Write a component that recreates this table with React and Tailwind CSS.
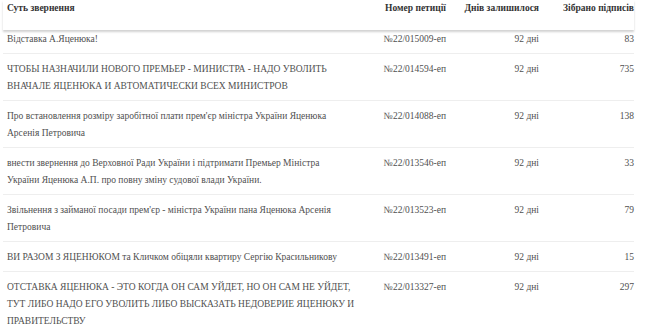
import React from "react";

const rows = [
  { t: ["Відставка А.Яценюка!"], n: "№22/015009-еп", c: "83" },
  { t: ["ЧТОБЫ НАЗНАЧИЛИ НОВОГО ПРЕМЬЕР - МИНИСТРА - НАДО УВОЛИТЬ", "ВНАЧАЛЕ ЯЦЕНЮКА И АВТОМАТИЧЕСКИ ВСЕХ МИНИСТРОВ"], n: "№22/014594-еп", c: "735" },
  { t: ["Про встановлення розміру заробітної плати прем'єр міністра України Яценюка", "Арсенія Петровича"], n: "№22/014088-еп", c: "138" },
  { t: ["внести звернення до Верховної Ради України і підтримати Премьер Міністра", "України Яценюка А.П. про повну зміну судової влади України."], n: "№22/013546-еп", c: "33" },
  { t: ["Звільнення з займаної посади прем'єр - міністра України пана Яценюка Арсенія", "Петровича"], n: "№22/013523-еп", c: "79" },
  { t: ["ВИ РАЗОМ З ЯЦЕНЮКОМ та Кличком обіцяли квартиру Сергію Красильникову"], n: "№22/013491-еп", c: "15" },
  { t: ["ОТСТАВКА ЯЦЕНЮКА - ЭТО КОГДА ОН САМ УЙДЕТ, НО ОН САМ НЕ УЙДЕТ,", "ТУТ ЛИБО НАДО ЕГО УВОЛИТЬ ЛИБО ВЫСКАЗАТЬ НЕДОВЕРИЕ ЯЦЕНЮКУ И", "ПРАВИТЕЛЬСТВУ"], n: "№22/013327-еп", c: "297" },
];

export default function App() {
  return (
    <div className="w-[650px] h-[328px] overflow-hidden bg-white text-[9.5px] leading-[17px] text-[#505050] [font-family:Liberation_Serif,DejaVu_Serif,serif]">
      <div className="relative z-10 h-[30px] bg-white shadow-[0_2px_2px_rgba(0,0,0,0.18)] ml-[3px] w-[631px] grid grid-cols-[352px_91px_93px_95px] font-bold text-[#333]">
        <div className="pl-1">Суть звернення</div>
        <div className="text-right">Номер петиції</div>
        <div className="text-right">Днів залишилося</div>
        <div className="text-right">Зібрано підписів</div>
      </div>
      <div className="ml-[3px] w-[631px]">
        {rows.map((r, i) => (
          <div key={i} className={`grid grid-cols-[352px_91px_93px_95px] border-b border-[#eeeeee] ${i === 0 ? "pt-[1px] pb-[5px]" : "pt-[7px] pb-[5px]"}`}>
            <div className="pl-1 whitespace-nowrap">
              {r.t.map((l, j) => (
                <div key={j}>{l}</div>
              ))}
            </div>
            <div className="text-right">{r.n}</div>
            <div className="text-right">92 дні</div>
            <div className="text-right">{r.c}</div>
          </div>
        ))}
      </div>
    </div>
  );
}
